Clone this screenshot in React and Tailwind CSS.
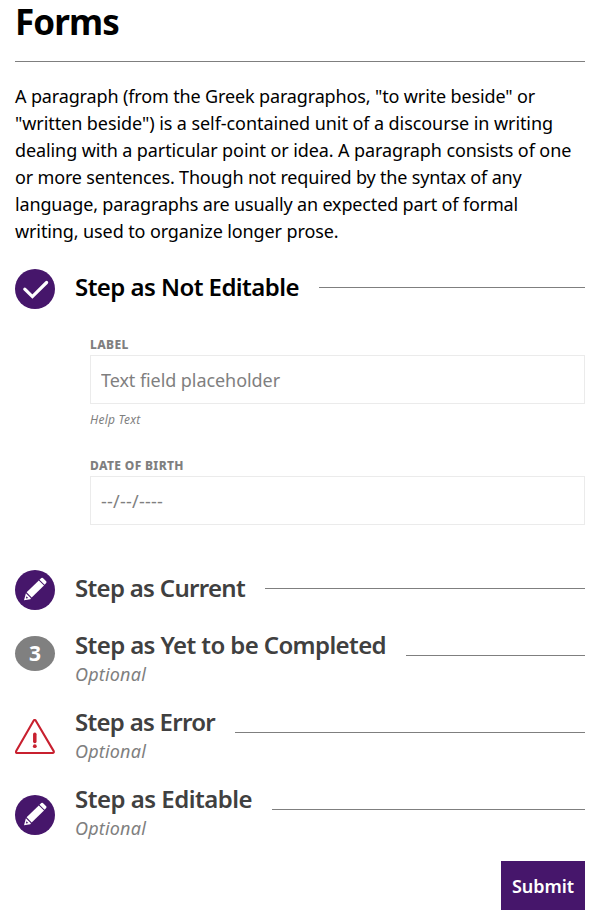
import React from "react";

function CheckIcon() {
  return (
    <svg className="block h-10 w-10" viewBox="0 0 40 40">
      <circle cx="20" cy="20" r="20" fill="#46166b" />
      <path d="M9.8 20.2 L17.4 27.6 L31.6 13.5" fill="none" stroke="#fff" strokeWidth="3.2" strokeLinecap="round" />
    </svg>
  );
}

function PencilIcon() {
  return (
    <svg className="block h-10 w-10" viewBox="0 0 40 40">
      <circle cx="20" cy="20" r="20" fill="#46166b" />
      <g fill="#fff">
        <path d="M23.8 10.4 L29 15.6 L16.7 27.4 L11.6 22.3 Z" />
        <path d="M24.5 9.7 L26.3 8 Q27.1 7.3 27.9 8 L31.2 11.3 Q31.9 12.1 31.2 12.9 L29.6 14.8 Z" />
        <path fillRule="evenodd" d="M10.9 23.2 L15.9 28.2 L15.4 29.2 L9 30.3 Z M11.4 26.2 L10.9 28.5 L13.2 28.1 Z" />
      </g>
    </svg>
  );
}

function ErrorIcon() {
  return (
    <svg className="block h-[35px] w-10" viewBox="0 0 40 35">
      <path d="M18.6 1.7 Q19.7 0.3 20.8 1.7 L38.7 32.1 Q39.2 34 37.6 34 H2.2 Q0.5 34 1.2 32.1 Z" fill="none" stroke="#c8202f" strokeWidth="2.1" strokeLinejoin="round" />
      <path d="M19.8 15.2 V22.4" stroke="#c8202f" strokeWidth="3.5" strokeLinecap="round" />
      <circle cx="19.8" cy="27.2" r="1.9" fill="#c8202f" />
    </svg>
  );
}

function NumberIcon({ value }) {
  return (
    <div className="flex h-[35px] w-10 items-center justify-center rounded-[50%] bg-[#808080] text-[21px] leading-none font-bold text-white">
      {value}
    </div>
  );
}

function OptionalStep({ icon, iconClass, title, titleClass }) {
  return (
    <div className="flex h-[60px] items-start gap-5">
      <div className={iconClass}>{icon}</div>
      <div className="flex-none">
        <h2 className={"h-[33px] text-[24px] leading-[33px] font-semibold whitespace-nowrap text-[#404040] " + titleClass}>{title}</h2>
        <p className="text-[18px] leading-[27px] tracking-[0.19px] text-[#7f7f7f] italic">Optional</p>
      </div>
      <div className="mt-[27px] h-px flex-1 bg-[#7f7f7f]" />
    </div>
  );
}

export default function App() {
  return (
    <main className="h-[910px] bg-white px-[15px] font-['Noto_Sans',sans-serif] text-black">
      <h1 className="h-[61px] text-[35px] leading-[43px] font-bold tracking-[-0.9px]">Forms</h1>
      <div className="h-px bg-[#7f7f7f]" />

      <p className="mt-[21px] text-[18px] leading-[27px] whitespace-nowrap">
        <span className="block tracking-[-0.14px]">A paragraph (from the Greek paragraphos, "to write beside" or</span>
        <span className="block tracking-[-0.074px]">"written beside") is a self-contained unit of a discourse in writing</span>
        <span className="block tracking-[-0.1px]">dealing with a particular point or idea. A paragraph consists of one</span>
        <span className="block tracking-[-0.167px]">or more sentences. Though not required by the syntax of any</span>
        <span className="block tracking-[-0.155px]">language, paragraphs are usually an expected part of formal</span>
        <span className="block tracking-[-0.11px]">writing, used to organize longer prose.</span>
      </p>

      <div className="mt-6 flex h-10 items-start gap-5">
        <CheckIcon />
        <h2 className="text-[24px] leading-9 font-semibold tracking-[-0.552px] whitespace-nowrap">Step as Not Editable</h2>
        <div className="mt-[18px] h-px flex-1 bg-[#7f7f7f]" />
      </div>

      <form className="mt-[26px] pl-[75px] text-[#7f7f7f]">
        <label className="block h-5 text-[12px] leading-5 font-extrabold tracking-[0.35px]">LABEL</label>
        <input className="block h-[49px] w-full border border-[#ebebeb] px-2.5 text-[18px] tracking-[-0.07px] placeholder:text-[#7f7f7f]" placeholder="Text field placeholder" />
        <p className="mt-[7px] text-[12px] leading-[18px] tracking-[0.25px] italic">Help Text</p>
        <label className="mt-[27px] block h-5 text-[12px] leading-5 font-extrabold tracking-[0.35px]">DATE OF BIRTH</label>
        <input className="block h-[49px] w-full border border-[#ebebeb] px-2.5 text-[18px] tracking-[0.224px] placeholder:text-[#7f7f7f]" placeholder="--/--/----" />
      </form>

      <div className="mt-[45px] flex h-10 items-start gap-5">
        <PencilIcon />
        <h2 className="text-[24px] leading-9 font-semibold tracking-[-0.695px] whitespace-nowrap text-[#404040]">Step as Current</h2>
        <div className="mt-[18px] h-px flex-1 bg-[#7f7f7f]" />
      </div>

      <div className="mt-[18px] flex flex-col gap-[17px]">
        <OptionalStep icon={<NumberIcon value="3" />} iconClass="pt-2" title="Step as Yet to be Completed" titleClass="tracking-[-0.614px]" />
        <OptionalStep icon={<ErrorIcon />} iconClass="pt-3.5" title="Step as Error" titleClass="tracking-[-0.718px]" />
        <OptionalStep icon={<PencilIcon />} iconClass="pt-[13px]" title="Step as Editable" titleClass="tracking-[-0.513px]" />
      </div>

      <div className="mt-[19px] flex justify-end">
        <button className="h-[49px] w-[84px] bg-[#46166b] pt-0.5 text-[18px] font-semibold tracking-[-0.056px] text-white">Submit</button>
      </div>
    </main>
  );
}
